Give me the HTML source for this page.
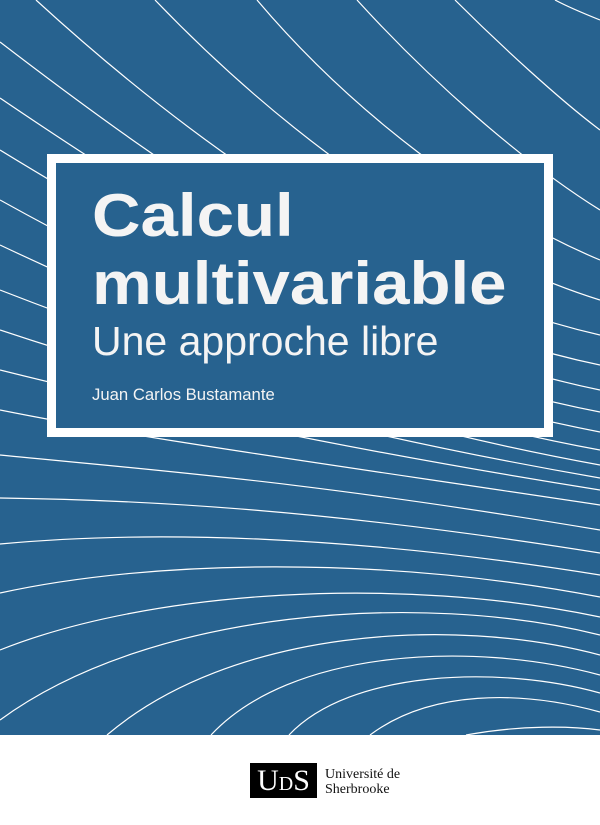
<!DOCTYPE html>
<html><head><meta charset="utf-8"><style>
html,body{margin:0;padding:0;background:#fff;}
#wrap{position:relative;width:600px;height:825px;overflow:hidden;background:#fff;}
#bg{position:absolute;left:0;top:0;width:600px;height:735px;background:#27628f;}
svg{position:absolute;left:0;top:0;}
#box{position:absolute;left:47px;top:154px;width:488px;height:265px;border:9px solid #fff;background:#27628f;}
.t{position:absolute;color:#f4f4f4;font-family:"Liberation Sans",sans-serif;white-space:nowrap;transform-origin:0 0;}
#logo{position:absolute;left:250px;top:763px;width:67px;height:35px;background:#000;color:#fff;font-family:"Liberation Serif",serif;font-size:30px;line-height:35px;text-align:center;}
#ut{position:absolute;left:325px;top:767px;font-family:"Liberation Serif",serif;font-size:14px;line-height:15px;color:#111;}
</style></head><body><div id="wrap">
<div id="bg"></div>
<svg width="600" height="735" viewBox="0 0 600 735" fill="none" stroke="#fff" stroke-width="1.2">
<path d="M555,0 C570,8 590,16 600,20"/>
<path d="M455,0 C500,45 560,100 600,130"/>
<path d="M357,0 C430,80 520,160 600,210"/>
<path d="M257,0 C350,110 480,210 600,260"/>
<path d="M155,0 C280,130 440,250 600,300"/>
<path d="M36,0 C200,150 400,290 600,335"/>
<path d="M0,42 C180,180 380,320 600,365"/>
<path d="M0,98 C180,220 380,345 600,390"/>
<path d="M0,150 C180,260 380,370 600,412"/>
<path d="M0,200 C180,300 380,390 600,432"/>
<path d="M0,245 C180,330 380,410 600,450"/>
<path d="M0,290 C180,360 380,425 600,465"/>
<path d="M0,330 C180,390 380,440 600,478"/>
<path d="M0,370 C180,415 380,455 600,490"/>
<path d="M0,410 C150,440 300,460 600,505"/>
<path d="M0,455 C150,470 300,480 600,530"/>
<path d="M0,498 C150,500 330,510 600,553"/>
<path d="M0,544 C150,530 350,535 600,575"/>
<path d="M0,593 C150,560 380,555 600,597"/>
<path d="M0,650 C150,590 400,575 600,617"/>
<path d="M0,720 C150,610 420,590 600,635"/>
<path d="M107,735 C230,630 450,615 600,655"/>
<path d="M211,735 C290,650 470,640 600,675"/>
<path d="M289,735 C350,670 500,665 600,693"/>
<path d="M370,735 C430,690 520,690 600,712"/>
<path d="M466,735 C520,725 570,726 600,730"/>
</svg>
<div id="box"></div>
<div class="t" style="left:92px;top:186px;font-size:60px;font-weight:bold;line-height:60px;transform:scaleX(1.12);">Calcul</div>
<div class="t" style="left:92px;top:254px;font-size:60px;font-weight:bold;line-height:60px;transform:scaleX(1.12);">multivariable</div>
<div class="t" style="left:92px;top:319px;font-size:41px;line-height:44px;">Une approche libre</div>
<div class="t" style="left:92px;top:385px;font-size:16.7px;line-height:20px;">Juan Carlos Bustamante</div>
<div id="logo">U<span style="font-size:20px">D</span>S</div>
<div id="ut">Université de<br>Sherbrooke</div>
</div></body></html>
